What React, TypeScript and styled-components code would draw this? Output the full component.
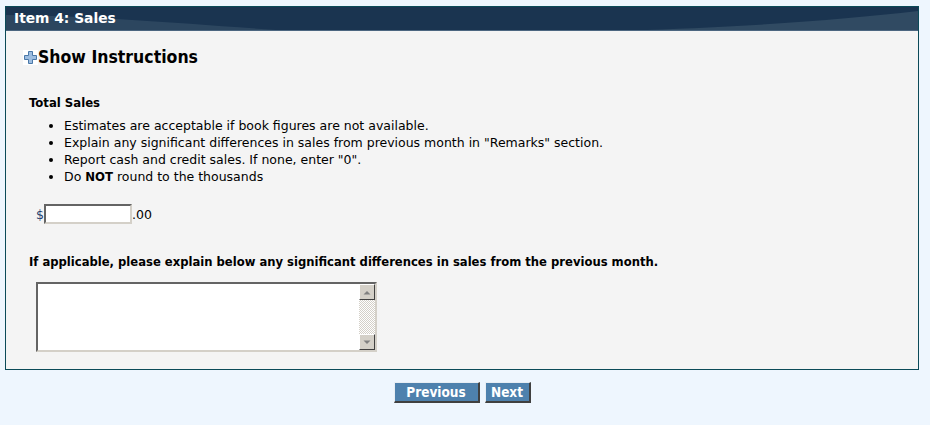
import styled, { createGlobalStyle } from "styled-components";

const GlobalStyle = createGlobalStyle`
  body {
    margin: 0;
    background: #eef6fe;
    font-family: "DejaVu Sans", Verdana, sans-serif;
    font-size: 12.5px;
    color: #000;
  }
  b {
    font-family: "DejaVu Sans Condensed", "DejaVu Sans", sans-serif;
    font-size: 13px;
  }
`;

const boldFace = `
  font-family: "DejaVu Sans Condensed", "DejaVu Sans", sans-serif;
  font-weight: bold;
`;

const Page = styled.div`
  padding: 6px 11px 0 5px;
  width: 914px;
`;

const Panel = styled.div`
  border: 1px solid #0b4a58;
  background: #f4f4f4;
`;

const Header = styled.div`
  position: relative;
  height: 23px;
  background: #1a3450;
  border-bottom: 1px solid #4c6680;
  overflow: hidden;
`;

const HeaderSwoosh = styled.svg`
  position: absolute;
  left: 0;
  top: 0;
`;

const HeaderTitle = styled.h2`
  position: relative;
  margin: 0;
  padding-left: 8px;
  font-family: "DejaVu Sans", Verdana, sans-serif;
  font-size: 13.8px;
  line-height: 23px;
  font-weight: bold;
  color: #fff;
`;

const Body = styled.div`
  padding: 16px 17px 17px 17px;
`;

const ToggleRow = styled.div`
  display: flex;
  align-items: center;
  height: 20px;
`;

const ToggleLabel = styled.span`
  ${boldFace}
  font-size: 17.5px;
  line-height: 20px;
`;

const Section = styled.div`
  padding-left: 6px;
  margin-top: 27px;
`;

const SectionTitle = styled.div`
  ${boldFace}
  font-size: 13px;
  line-height: 17px;
`;

const Bullets = styled.ul`
  margin: 6px 0 0;
  padding-left: 35px;
  line-height: 17px;
`;

const AmountRow = styled.div`
  display: flex;
  align-items: center;
  margin-top: 19px;
  padding-left: 13px;
`;

const Dollar = styled.span`
  color: #1f3f6f;
`;

const sunken = `
  border-style: solid;
  border-width: 2px;
  border-color: #646464 #d4d0c8 #d4d0c8 #646464;
  box-sizing: border-box;
  background: #fff;
`;

const AmountInput = styled.input`
  ${sunken}
  width: 88px;
  height: 20px;
  margin: 0;
  padding: 0 2px;
  font: inherit;
`;

const Question = styled.div`
  ${boldFace}
  margin-top: 29px;
  font-size: 12.9px;
  line-height: 17px;
`;

const TextBox = styled.div`
  ${sunken}
  display: flex;
  width: 341px;
  height: 70px;
  margin: 12px 0 0 13px;
`;

const TextArea = styled.textarea`
  flex: 1;
  border: 0;
  margin: 0;
  padding: 2px;
  resize: none;
  outline: none;
  font: inherit;
`;

const ScrollTrack = styled.div`
  display: flex;
  flex-direction: column;
  justify-content: space-between;
  width: 16px;
  background: repeating-conic-gradient(#d4d0c8 0% 25%, #fff 0% 50%) 0 0 / 2px 2px;
`;

const ScrollButton = styled.div`
  width: 16px;
  height: 16px;
  box-sizing: border-box;
  background: #d4d0c8;
  border-style: solid;
  border-width: 1px;
  border-color: #fff #404040 #404040 #fff;
  display: flex;
  align-items: center;
  justify-content: center;
`;

const Nav = styled.div`
  display: flex;
  justify-content: center;
  gap: 5px;
  margin-top: 12px;
`;

const NavButton = styled.button<{ $width: number }>`
  ${boldFace}
  width: ${(p) => p.$width}px;
  height: 21px;
  padding: 0;
  background: #4e81ad;
  color: #fff;
  font-size: 13.5px;
  border-style: solid;
  border-width: 1px 2px 2px 1px;
  border-color: #e8eef4 #404040 #404040 #e8eef4;
  cursor: pointer;
`;

function PlusIcon() {
  return (
    <svg width="15" height="15" viewBox="0 0 15 15">
      <rect width="15" height="15" fill="#fff" />
      <path
        d="M5.5 1.5h4v4h4v4h-4v4h-4v-4h-4v-4h4z"
        fill="#9dbde0"
        stroke="#4a78a8"
        strokeWidth="1"
      />
    </svg>
  );
}

function Arrow({ up }: { up?: boolean }) {
  return (
    <svg width="8" height="5" viewBox="0 0 8 5">
      <path d={up ? "M0.5 4.5h7L4 1z" : "M0.5 0.5h7L4 4z"} fill="#808080" />
    </svg>
  );
}

export default function App() {
  return (
    <>
      <GlobalStyle />
      <Page>
        <Panel>
          <Header>
            <HeaderSwoosh width="912" height="23" viewBox="0 0 912 23">
              <path d="M0 8 C90 9 170 16 270 23 L0 23 Z" fill="#2c465f" />
              <path d="M640 23 C760 19 840 12 912 4 L912 23 Z" fill="#304a62" />
            </HeaderSwoosh>
            <HeaderTitle>Item 4: Sales</HeaderTitle>
          </Header>
          <Body>
            <ToggleRow>
              <PlusIcon />
              <ToggleLabel>Show Instructions</ToggleLabel>
            </ToggleRow>
            <Section>
              <SectionTitle>Total Sales</SectionTitle>
              <Bullets>
                <li>Estimates are acceptable if book figures are not available.</li>
                <li>Explain any significant differences in sales from previous month in "Remarks" section.</li>
                <li>Report cash and credit sales. If none, enter "0".</li>
                <li>
                  Do <b>NOT</b> round to the thousands
                </li>
              </Bullets>
            </Section>
            <AmountRow>
              <Dollar>$</Dollar>
              <AmountInput type="text" />
              <span>.00</span>
            </AmountRow>
            <Section style={{ marginTop: 0 }}>
              <Question>
                If applicable, please explain below any significant differences in sales from the previous month.
              </Question>
            </Section>
            <TextBox>
              <TextArea />
              <ScrollTrack>
                <ScrollButton>
                  <Arrow up />
                </ScrollButton>
                <ScrollButton>
                  <Arrow />
                </ScrollButton>
              </ScrollTrack>
            </TextBox>
          </Body>
        </Panel>
        <Nav>
          <NavButton $width={86}>Previous</NavButton>
          <NavButton $width={46}>Next</NavButton>
        </Nav>
      </Page>
    </>
  );
}
